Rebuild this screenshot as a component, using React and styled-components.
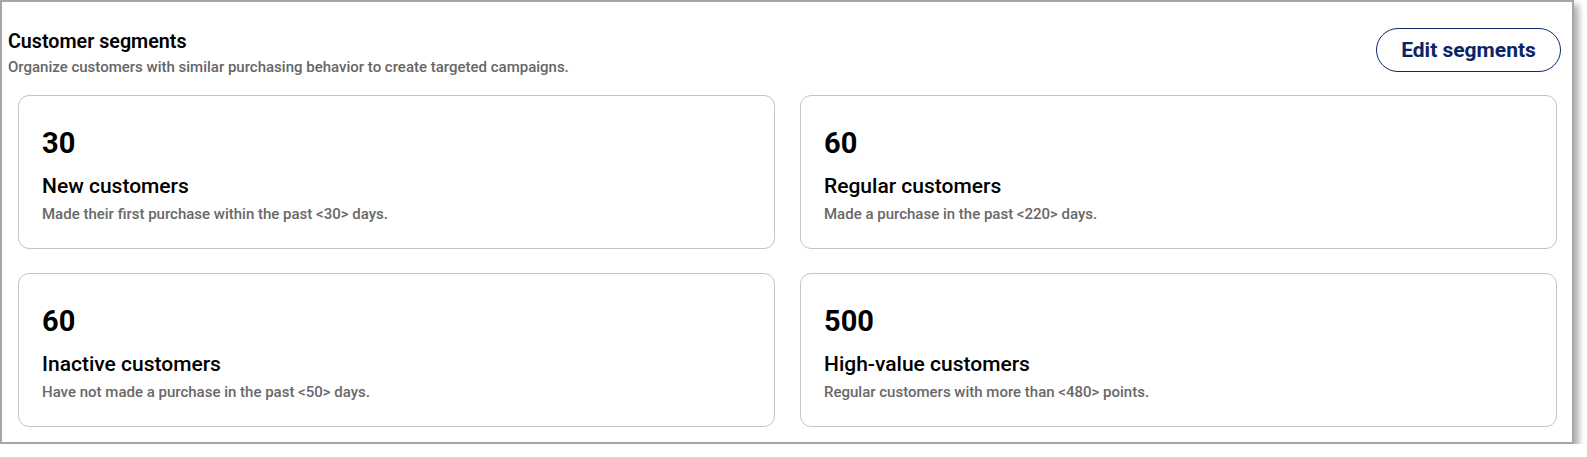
import React from "react";
import styled, { createGlobalStyle } from "styled-components";

const GlobalStyle = createGlobalStyle`
  body {
    margin: 0;
    background: #ffffff;
    font-family: Roboto, "Liberation Sans", sans-serif;
  }
`;

const Frame = styled.div`
  width: 1570px;
  border: 2px solid #a6a6a6;
  box-shadow: 5px 5px 6px rgba(0, 0, 0, 0.3);
  background: #ffffff;
  padding: 0 0 15px 0;
`;

const Header = styled.div`
  display: flex;
  justify-content: space-between;
  align-items: flex-start;
  padding: 26px 11px 0 6px;
`;

const HeadText = styled.div`
  display: flex;
  flex-direction: column;
`;

const Title = styled.h1`
  margin: 2px 0 0;
  font-size: 19.7px;
  line-height: 24px;
  font-weight: 600;
  color: #000000;
`;

const Subtitle = styled.p`
  margin: 4px 0 0;
  font-size: 15px;
  line-height: 18px;
  font-weight: 500;
  color: #666666;
`;

const EditButton = styled.button`
  height: 44px;
  width: 185px;
  border: 1px solid #0d2a6b;
  border-radius: 22px;
  background: #ffffff;
  color: #0a2468;
  font-family: Roboto, "Liberation Sans", sans-serif;
  font-size: 21px;
  font-weight: 700;
  cursor: pointer;
`;

const Grid = styled.div`
  display: grid;
  grid-template-columns: 1fr 1fr;
  column-gap: 25px;
  row-gap: 24px;
  margin: 19px 15px 0 16px;
`;

const Card = styled.div`
  border: 1px solid #c4c4c4;
  border-radius: 11px;
  padding: 30px 23px 25.5px;
  display: flex;
  flex-direction: column;
`;

const Count = styled.div`
  font-size: 29px;
  line-height: 34px;
  font-weight: 700;
  color: #000000;
`;

const CardTitle = styled.div`
  margin-top: 13.5px;
  font-size: 21px;
  line-height: 24px;
  font-weight: 500;
  color: #000000;
`;

const CardDesc = styled.div`
  margin-top: 7px;
  font-size: 15px;
  line-height: 18px;
  font-weight: 500;
  color: #686868;
`;

const segments = [
  { count: 30, name: "New customers", desc: "Made their first purchase within the past <30> days." },
  { count: 60, name: "Regular customers", desc: "Made a purchase in the past <220> days." },
  { count: 60, name: "Inactive customers", desc: "Have not made a purchase in the past <50> days." },
  { count: 500, name: "High-value customers", desc: "Regular customers with more than <480> points." },
];

export default function App() {
  return (
    <>
      <GlobalStyle />
      <Frame>
        <Header>
          <HeadText>
            <Title>Customer segments</Title>
            <Subtitle>Organize customers with similar purchasing behavior to create targeted campaigns.</Subtitle>
          </HeadText>
          <EditButton>Edit segments</EditButton>
        </Header>
        <Grid>
          {segments.map((s) => (
            <Card key={s.name}>
              <Count>{s.count}</Count>
              <CardTitle>{s.name}</CardTitle>
              <CardDesc>{s.desc}</CardDesc>
            </Card>
          ))}
        </Grid>
      </Frame>
    </>
  );
}
